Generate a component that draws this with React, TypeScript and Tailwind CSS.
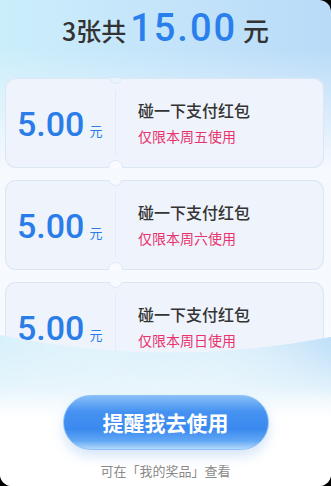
const cn = '"Noto Sans CJK SC", "Noto Sans", sans-serif';
const num = 'Roboto, "Noto Sans CJK SC", sans-serif';

const coupons = [
  { day: "五", notchTop: "bg-[#e9f3fd]" },
  { day: "六", notchTop: "bg-[#f7fafe]" },
  { day: "日", notchTop: "bg-[#f7fafe]" },
];

function Coupon({ day, notchTop }: { day: string; notchTop: string }) {
  return (
    <div className="relative flex h-[90px] overflow-hidden rounded-[11px] bg-[#eff4fc] shadow-[inset_0_0_0_1px_#dce7f4]">
      <span className={`absolute -top-[7px] left-[104px] h-[13px] w-[13px] rounded-full border border-[#dce7f4] ${notchTop}`} />
      <span className="absolute -bottom-[7px] left-[103px] h-[15px] w-[15px] rounded-full border border-[#dce7f4] bg-[#f9fbfe]" />
      <div className="flex w-[110px] items-baseline self-center pl-3 pt-[2px]">
        <span className="text-[34px] font-medium leading-none text-[#2a7de9]" style={{ fontFamily: num }}>5.00</span>
        <span className="ml-[5px] text-[13px] text-[#2a7de9]" style={{ fontFamily: cn }}>元</span>
      </div>
      <div className="my-3 w-px bg-[#e4ebf5]" />
      <div className="flex flex-col justify-center gap-[5px] pb-[2px] pl-[22px]" style={{ fontFamily: cn }}>
        <div className="text-[16px] font-medium leading-[22px] text-[#333333]">碰一下支付红包</div>
        <div className="text-[14px] leading-[20px] text-[#e8336e]">仅限本周{day}使用</div>
      </div>
    </div>
  );
}

export default function App() {
  return (
    <div className="h-[486px] w-[331px] bg-black">
      <div className="relative h-full overflow-hidden rounded-b-[12px] rounded-tr-[12px] bg-[linear-gradient(180deg,rgba(255,255,255,0)_0%,rgba(255,255,255,0)_10%,#f6f9fe_35%,#f7fafe_100%),linear-gradient(90deg,#cbeefb_0%,#c4e4fa_50%,#b9dbf8_100%)]">
        <h1 className="flex h-[78px] items-baseline justify-center pt-[9px] text-[#333333]">
          <span className="text-[25px] font-medium leading-none" style={{ fontFamily: cn }}>3张共</span>
          <span className="ml-[4px] mr-[6px] text-[38px] font-medium leading-none tracking-[2px] text-[#2a7fec]" style={{ fontFamily: num }}>15.00</span>
          <span className="text-[26px] font-medium leading-none" style={{ fontFamily: cn }}>元</span>
        </h1>

        <div className="flex flex-col gap-3 pl-[5px] pr-[7px]">
          {coupons.map((c) => (
            <Coupon key={c.day} day={c.day} notchTop={c.notchTop} />
          ))}
        </div>

        <div className="absolute inset-x-0 bottom-0 top-[330px]">
          <svg className="absolute inset-0" width="331" height="156" viewBox="0 0 331 156" preserveAspectRatio="none">
            <defs>
              <linearGradient id="fade" x1="0" y1="0" x2="0" y2="1">
                <stop offset="0" stopColor="#d9f0fb" />
                <stop offset="0.35" stopColor="#e9f6fc" />
                <stop offset="0.55" stopColor="#ffffff" />
                <stop offset="1" stopColor="#ffffff" />
              </linearGradient>
              <linearGradient id="side" x1="0" y1="0" x2="1" y2="0">
                <stop offset="0" stopColor="#d6f2fb" stopOpacity="0.6" />
                <stop offset="0.5" stopColor="#ffffff" stopOpacity="0" />
                <stop offset="1" stopColor="#b3d7f8" stopOpacity="0.8" />
              </linearGradient>
              <linearGradient id="sideFade" x1="0" y1="0" x2="0" y2="1">
                <stop offset="0" stopColor="#fff" stopOpacity="1" />
                <stop offset="0.45" stopColor="#fff" stopOpacity="0" />
              </linearGradient>
              <mask id="m">
                <rect width="331" height="156" fill="url(#sideFade)" />
              </mask>
            </defs>
            <path d="M0 5 Q165 39 331 7 L331 156 L0 156 Z" fill="url(#fade)" />
            <path d="M0 5 Q165 39 331 7 L331 156 L0 156 Z" fill="url(#side)" mask="url(#m)" />
          </svg>

          <div className="relative flex flex-col items-center pt-[65px]">
            <button
              className="flex h-[55px] w-[206px] items-center justify-center rounded-full border border-[#8cc2f8] bg-[linear-gradient(180deg,#86bdf7_0%,#4592f1_30%,#3a89ef_62%,#5fa6f4_84%,#b3d8fb_100%)] text-[21px] font-bold text-white shadow-[0_6px_12px_rgba(90,150,230,0.25)]"
              style={{ fontFamily: cn }}
            >
              提醒我去使用
            </button>
            <p className="mt-[12px] text-[13px] leading-[18px] text-[#8a8a8a]" style={{ fontFamily: cn }}>
              可在「我的奖品」查看
            </p>
          </div>
        </div>
      </div>
    </div>
  );
}
